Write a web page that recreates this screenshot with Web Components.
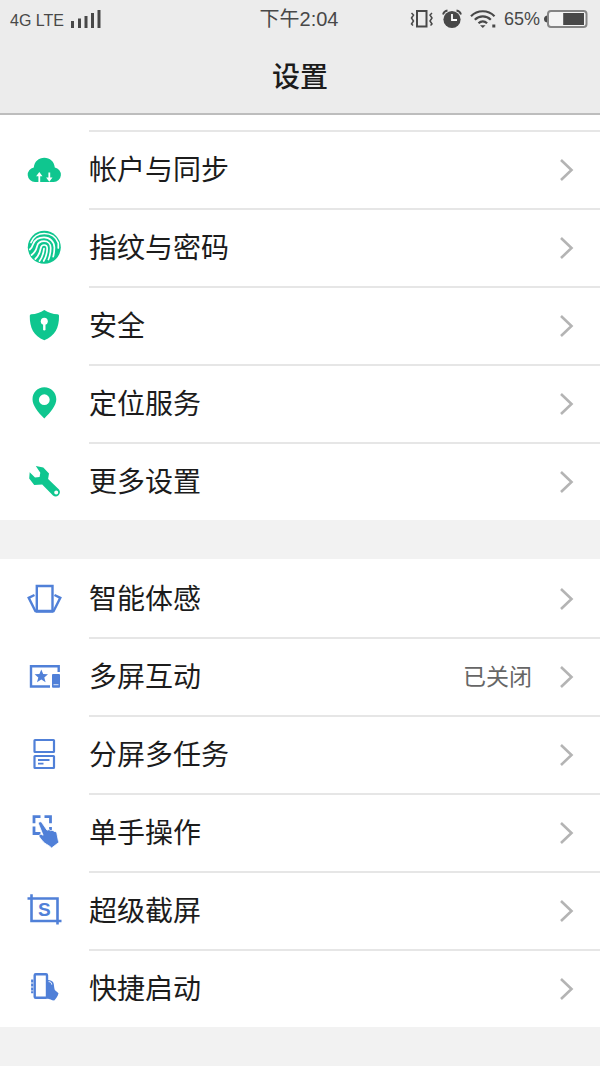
<!DOCTYPE html>
<html lang="zh-CN">
<head>
<meta charset="utf-8">
<meta name="viewport" content="width=device-width, initial-scale=1">
<title>设置</title>
<style>
  :root {
    --color-bar: #ececec;
    --color-page: #f2f2f2;
    --color-line: #e6e6e6;
    --color-green: #0fc68f;
    --color-blue: #5080d8;
    --color-status: #484848;
  }

  body {
    margin: 0;
    background: var(--color-page);
    color: #1c1c1c;
    font-family: "Liberation Sans", "Noto Sans CJK SC", sans-serif;
  }
</style>
</head>
<body>

<settings-header heading="设置">
  <status-bar network="4G LTE" time="下午2:04" battery="65"></status-bar>
</settings-header>

<main>
  <settings-group continued>
    <settings-row icon="cloud">帐户与同步</settings-row>
    <settings-row icon="fingerprint">指纹与密码</settings-row>
    <settings-row icon="shield">安全</settings-row>
    <settings-row icon="pin">定位服务</settings-row>
    <settings-row icon="wrench">更多设置</settings-row>
  </settings-group>
  <settings-group>
    <settings-row icon="motion" first>智能体感</settings-row>
    <settings-row icon="screens" value="已关闭">多屏互动</settings-row>
    <settings-row icon="split">分屏多任务</settings-row>
    <settings-row icon="one-hand">单手操作</settings-row>
    <settings-row icon="capture">超级截屏</settings-row>
    <settings-row icon="quick">快捷启动</settings-row>
  </settings-group>
</main>

<script>
  const ICONS = {
    cloud: `
      <path fill="var(--color-green)" d="M9 30a7.3 7.3 0 0 1-1.2-14.5C8.200 9.500 12.700 5.700 18.300 5.700s10.100 3.800 10.500 9.800A7.300 7.300 0 0 1 27.700 30z"/>
      <path fill="none" stroke="#fff" stroke-width="1.800" d="M13.300 30v-7M23.300 20.500v6"/>
      <path fill="#fff" d="M13.300 20l3.200 4.200h-6.400zM23.300 29.700l3.200-4.200h-6.400z"/>`,
    fingerprint: `
      <circle cx="18.300" cy="17.300" r="16.500" fill="var(--color-green)"/>
      <g fill="none" stroke="#fff" stroke-width="1.700" stroke-linecap="round">
        <path d="M5 12.500C7.500 6.500 12.600 3.500 18.300 3.500c6.300 0 11.800 3.600 14 9.500v5"/>
        <path d="M3.800 19.500c2-1.500 2.700-3.300 3.400-5.500C8.800 10 13 7.400 18 7.400c6 0 10.400 4.300 10.400 10.200 0 3.600-.3 6-1.200 9"/>
        <path d="M5.500 25c3.300-2.300 4.700-5.300 5.500-8.500.8-3.300 3.500-5.300 7-5.300 4 0 6.700 2.800 6.700 6.700 0 4.300-.8 8-2.300 11.600"/>
        <path d="M9.300 29c3.300-3 4.700-6.700 5.500-11 .4-2 1.500-3 3.200-3 2 0 3.200 1.300 3.200 3.500 0 4.500-1.200 8.500-3.500 12.500"/>
        <path d="M13.500 31c2.700-3.500 3.900-7.300 4.500-12.300"/>
      </g>`,
    shield: `
      <path fill="var(--color-green)" d="M18.300 2c4 2.700 8.500 4 13.200 4.300 1 .1 1.500.6 1.500 1.600C33.200 19.500 29 28 18.300 32.200 7.600 28 3.600 19.500 3.800 7.900c0-1 .5-1.500 1.500-1.600C10 6 14.400 4.700 18.300 2z"/>
      <circle cx="18.300" cy="13.300" r="3.500" fill="#fff"/>
      <path stroke="#fff" stroke-width="2.400" stroke-linecap="round" d="M18.300 14v7.200"/>`,
    pin: `
      <path fill="var(--color-green)" fill-rule="evenodd" d="M18.300 1.300c6.800 0 12 5.200 12 12 0 6-5.500 13-12 19.200C11.800 26.300 6.500 19.300 6.500 13.300c0-6.800 5.100-12 11.800-12zm0 7a5.400 5.400 0 1 0 0 10.800 5.400 5.400 0 0 0 0-10.800z"/>`,
    wrench: `
      <path fill="var(--color-green)" fill-rule="evenodd" d="M9.800 2l7.500 1.400 5.700 6-.9 5.700L33 25.600a4.300 4.300 0 0 1-6 6L16.200 20.400 8.200 21l-5-6.500.5-6.200L9 13.500l4.600-.6.700-4.200zM30.200 26.600a2 2 0 1 0 0 4 2 2 0 0 0 0-4z"/>`,
    motion: `
      <g fill="none" stroke="var(--color-blue)" stroke-width="2.400">
        <path d="M10.800 5h15.700v25H10.800z"/>
        <path d="M8.500 14l-5.800 2.800 7 14M28.500 14l5.800 2.800-7 14M9.500 30.500h18"/>
      </g>`,
    screens: `
      <path fill="none" stroke="var(--color-blue)" stroke-width="2.400" d="M32.700 13V7.300H5v20.200h19"/>
      <path fill="var(--color-blue)" d="M15.300 10.500l1.900 4.400 4.800.4-3.700 3.100 1.300 4.800-4.300-2.600-4.300 2.600 1.300-4.800-3.700-3.100 4.800-.4z"/>
      <rect x="26" y="15" width="8" height="13.700" rx="1" fill="var(--color-blue)"/>
      <path stroke="#fff" stroke-width=".8" d="M27.500 25.700h5"/>`,
    split: `
      <g fill="none" stroke="var(--color-blue)" stroke-width="2.200">
        <rect x="8.500" y="3" width="19.500" height="12" rx=".5"/>
        <rect x="8.500" y="19" width="19.500" height="12" rx=".5"/>
        <path stroke-width="1.800" d="M12 23h11.500M12 26.700h5.500"/>
      </g>`,
    "one-hand": `
      <path fill="none" stroke="var(--color-blue)" stroke-width="2.800" d="M8 8.200V1.700h6.500M18.500 1.700h6v6.500M24.500 12v7M8 11.500v7h6.500"/>
      <path fill="var(--color-blue)" stroke="#fff" stroke-width=".8" d="M12.600 9c-.7-2 2-3.200 3.200-1.400l5.200 7.600c1.500-.8 2.700-.5 3.700.5 1.500-.6 2.700-.3 3.500.8 1.500-.3 2.400.6 2.700 2l.9 4.500c.2 1.600.5 3 1.200 4.300L25.600 33c-2.200-2.500-4.600-3.200-7-5-2.400-2-3.700-4.200-5.400-6.200-.8-2 1.300-3 2.600-2.200l1.300.6z"/>`,
    capture: `
      <path fill="none" stroke="var(--color-blue)" stroke-width="2.600" d="M1.500 5.500h30v26M5.500 1.300v26.700h30"/>
      <text x="18.300" y="23" text-anchor="middle" font-size="19" font-weight="bold" fill="var(--color-blue)">S</text>`,
    quick: `
      <path fill="none" stroke="var(--color-blue)" stroke-width="2.200" d="M6.200 8.500v3M6.200 12.500v3M6.200 16.500v3M6.200 20.200v2"/>
      <path fill="var(--color-blue)" d="M21 9c3-.3 5.300.7 6.300 2.600 1 2.400.6 5 1.500 7.400l3.700 3.200c-.6 2.800-2 5-4.300 7.300-2.800 0-4.200-1.700-7.200-1.900z"/>
      <rect x="8.700" y="3.300" width="12.300" height="23.400" rx="1" fill="#fff" stroke="var(--color-blue)" stroke-width="2.400"/>
      <path fill="none" stroke="#fff" stroke-width="1" stroke-linecap="round" d="M23 10.700c1.500 0 2.500.7 2.700 2.500"/>`
  };

  class StatusBar extends HTMLElement {
    constructor() {
      super();
      this.attachShadow({ mode: 'open' });
    }

    connectedCallback() {
      const level = parseInt(this.getAttribute('battery')) || 0;
      const charge = 32 * level / 100;

      this.shadowRoot.innerHTML = `
        <style>
          :host {
            display: grid;
            grid-template-columns: 1fr auto 1fr;
            align-items: center;
            height: 38px;
            padding: 0 12px 0 10px;
            color: var(--color-status);
          }
          .side {
            display: flex;
            align-items: center;
            gap: 6px;
            font-size: 16px;
          }
          .network {
            padding-top: 4px;
          }
          .end {
            justify-content: flex-end;
            gap: 8px;
            font-size: 18px;
          }
          .power {
            display: flex;
            align-items: center;
            gap: 4px;
          }
          .time {
            font-size: 20px;
            line-height: 24px;
          }
          svg {
            display: block;
            flex: none;
          }
        </style>
        <div class="side">
          <span class="network">${this.getAttribute('network')}</span>
          <svg width="32" height="20" viewBox="0 0 32 20" fill="currentColor" aria-hidden="true">
            <path d="M1 12h3v7H1zM8 9.500h3V19H8zM14.500 7h3v12h-3zM21 4h3v15h-3zM27.500 1h3v18h-3z"/>
          </svg>
        </div>
        <span class="time">${this.getAttribute('time')}</span>
        <div class="side end">
          <svg width="24" height="20" viewBox="0 0 24 20" fill="none" stroke="currentColor" aria-hidden="true">
            <path stroke-width="2" d="M7 2h9.500v15.500H7z"/>
            <path stroke-width="1.500" d="M1.500 4l2 2-2 3 2 3-2 3 1.500 1.500M22 4l-2 2 2 3-2 3 2 3-1.500 1.500"/>
          </svg>
          <svg width="20" height="20" viewBox="0 0 20 20" aria-hidden="true">
            <circle cx="10" cy="10.500" r="8.600" fill="currentColor"/>
            <path d="M1 5.500Q2 2 5.500 1.500M14.500 1.500Q18 2 19 5.500" fill="none" stroke="currentColor" stroke-width="1.800"/>
            <path d="M10 5v6h5" fill="none" stroke="#fff" stroke-width="1.800"/>
          </svg>
          <svg width="26" height="20" viewBox="0 0 26 20" fill="none" stroke="currentColor" stroke-width="2.200" aria-hidden="true">
            <path d="M1 7.200C7.500.6 18 .6 24.500 7.200M4.800 10.800c4.600-4.500 11.500-4.500 16 0M8.500 14.300c2.600-2.500 6-2.500 8.600 0"/>
            <path d="M10 16.200h5.600L12.800 19zM22.300 15.500h3v3h-3z" fill="currentColor" stroke="none"/>
          </svg>
          <div class="power">
            <span>${level}%</span>
            <svg width="44" height="20" viewBox="0 0 44 20" aria-hidden="true">
              <rect x="4" y="2" width="38.500" height="16" rx="3" fill="#f4f4f4" stroke="#858585" stroke-width="2"/>
              <path d="M3 6.500v7Q0 13 0 10t3-3.500z" fill="currentColor"/>
              <rect x="${40 - charge}" y="4" width="${charge}" height="12" fill="currentColor"/>
            </svg>
          </div>
        </div>
      `;
    }
  }

  class SettingsHeader extends HTMLElement {
    constructor() {
      super();
      this.attachShadow({ mode: 'open' });
    }

    connectedCallback() {
      this.shadowRoot.innerHTML = `
        <style>
          :host {
            display: block;
            background: var(--color-bar);
            border-bottom: 2px solid #bdbdbd;
          }
          h1 {
            margin: 0;
            padding: 20px 0 15px;
            font-size: 28px;
            font-weight: 500;
            line-height: 40px;
            text-align: center;
          }
        </style>
        <slot></slot>
        <h1>${this.getAttribute('heading')}</h1>
      `;
    }
  }

  class SettingsGroup extends HTMLElement {
    constructor() {
      super();
      this.attachShadow({ mode: 'open' });
      this.shadowRoot.innerHTML = `
        <style>
          :host {
            display: block;
            margin-bottom: 39px;
            background: #fff;
          }
          /* the list goes on above the first row */
          :host([continued]) {
            padding-top: 15px;
          }
        </style>
        <slot></slot>
      `;
    }
  }

  class SettingsRow extends HTMLElement {
    constructor() {
      super();
      this.attachShadow({ mode: 'open' });
    }

    connectedCallback() {
      const icon = this.getAttribute('icon');
      const value = this.getAttribute('value');

      this.shadowRoot.innerHTML = `
        <style>
          :host {
            display: block;
          }
          a {
            display: flex;
            align-items: center;
            height: 78px;
            padding-left: 26px;
            color: inherit;
            text-decoration: none;
          }
          .body {
            display: flex;
            align-items: center;
            flex: 1;
            box-sizing: border-box;
            height: 100%;
            margin-left: 27px;
            padding-right: 26px;
            border-top: 2px solid var(--color-line);
          }
          :host([first]) .body {
            border-color: transparent;
          }
          .label {
            flex: 1;
            padding-top: 2px;
            font-size: 28px;
            line-height: 40px;
          }
          .value {
            margin-right: 26px;
            color: #666;
            font-size: 23px;
            line-height: 32px;
          }
          svg {
            display: block;
            flex: none;
          }
          /* centred below the line, like the label */
          .icon {
            margin-top: 2px;
          }
        </style>
        <a href="#${icon}">
          <svg class="icon" width="36" height="36" viewBox="0 0 36 36" aria-hidden="true">${ICONS[icon]}</svg>
          <span class="body">
            <span class="label"><slot></slot></span>
            ${value ? `<span class="value">${value}</span>` : ''}
            <svg width="16" height="24" viewBox="0 0 16 24" fill="none" stroke="#b4b4b4" stroke-width="2.600" aria-hidden="true">
              <path d="M3 2l10.500 10L3 22"/>
            </svg>
          </span>
        </a>
      `;
    }
  }

  customElements.define('status-bar', StatusBar);
  customElements.define('settings-header', SettingsHeader);
  customElements.define('settings-group', SettingsGroup);
  customElements.define('settings-row', SettingsRow);
</script>
</body>
</html>
